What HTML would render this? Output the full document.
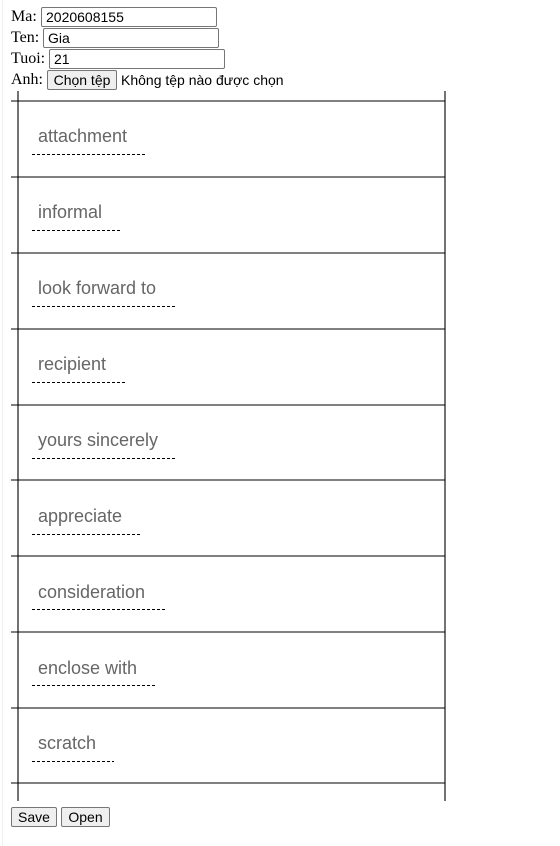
<!DOCTYPE html>
<html><head><meta charset="utf-8"><style>
body{margin:0;width:560px;height:846px;background:#fff;position:relative;overflow:hidden;font-family:"Liberation Serif",serif;font-size:16px}
.l{position:absolute;left:11px;line-height:20px}
.in{position:absolute;border:1px solid #767676;border-radius:2px;font:14px "Liberation Sans",sans-serif;line-height:18px;padding-left:4px;box-sizing:border-box;height:20px;width:176px;color:#000}
.bt{position:absolute;height:20px;box-sizing:border-box;border:1px solid #767676;border-radius:2px;background:#efefef;font:14px "Liberation Sans",sans-serif;line-height:18px;text-align:center;color:#000}
svg{position:absolute;left:0;top:0}
</style></head><body>
<div style="position:absolute;left:2px;top:0;width:1px;height:846px;background:#f0f0f0"></div>
<div class="l" style="top:7px">Ma:</div><div class="in" style="left:41px;top:7px">2020608155</div>
<div class="l" style="top:28px">Ten:</div><div class="in" style="left:43px;top:28px">Gia</div>
<div class="l" style="top:49px">Tuoi:</div><div class="in" style="left:49px;top:49px">21</div>
<div class="l" style="top:70px">Anh:</div><div class="bt" style="left:47px;top:70px;width:70px">Chọn tệp</div>
<div style="position:absolute;left:121px;top:70px;font:14px 'Liberation Sans',sans-serif;line-height:20px">Không tệp nào được chọn</div>
<svg width="560" height="846" font-family="Liberation Sans, sans-serif" font-size="18" fill="#666">
<g stroke="#000" stroke-width="1.1">
<line x1="18" y1="91" x2="18" y2="801"/><line x1="445" y1="91" x2="445" y2="801"/>
<line x1="11" y1="101" x2="445" y2="101"/><line x1="11" y1="177" x2="445" y2="177"/>
<line x1="11" y1="253" x2="445" y2="253"/><line x1="11" y1="329" x2="445" y2="329"/>
<line x1="11" y1="405" x2="445" y2="405"/><line x1="11" y1="480" x2="445" y2="480"/>
<line x1="11" y1="556" x2="445" y2="556"/><line x1="11" y1="632" x2="445" y2="632"/>
<line x1="11" y1="708" x2="445" y2="708"/><line x1="11" y1="783" x2="445" y2="783"/>
</g>
<g stroke="#000" stroke-width="1" stroke-dasharray="3,2">
<line x1="32" y1="154.5" x2="145" y2="154.5"/><line x1="32" y1="230.5" x2="121" y2="230.5"/>
<line x1="32" y1="306.5" x2="176" y2="306.5"/><line x1="32" y1="382.5" x2="125" y2="382.5"/>
<line x1="32" y1="458.5" x2="177" y2="458.5"/><line x1="32" y1="534.5" x2="141" y2="534.5"/>
<line x1="32" y1="609.5" x2="165" y2="609.5"/><line x1="32" y1="685.5" x2="156" y2="685.5"/>
<line x1="32" y1="761.5" x2="114" y2="761.5"/>
</g>
<text x="38" y="142">attachment</text><text x="38" y="218">informal</text>
<text x="38" y="294">look forward to</text><text x="38" y="370">recipient</text>
<text x="38" y="446">yours sincerely</text><text x="38" y="522">appreciate</text>
<text x="38" y="598">consideration</text><text x="38" y="674">enclose with</text>
<text x="38" y="749">scratch</text>
</svg>
<div class="bt" style="left:11px;top:807px;width:46px">Save</div>
<div class="bt" style="left:61px;top:807px;width:49px">Open</div>
</body></html>
